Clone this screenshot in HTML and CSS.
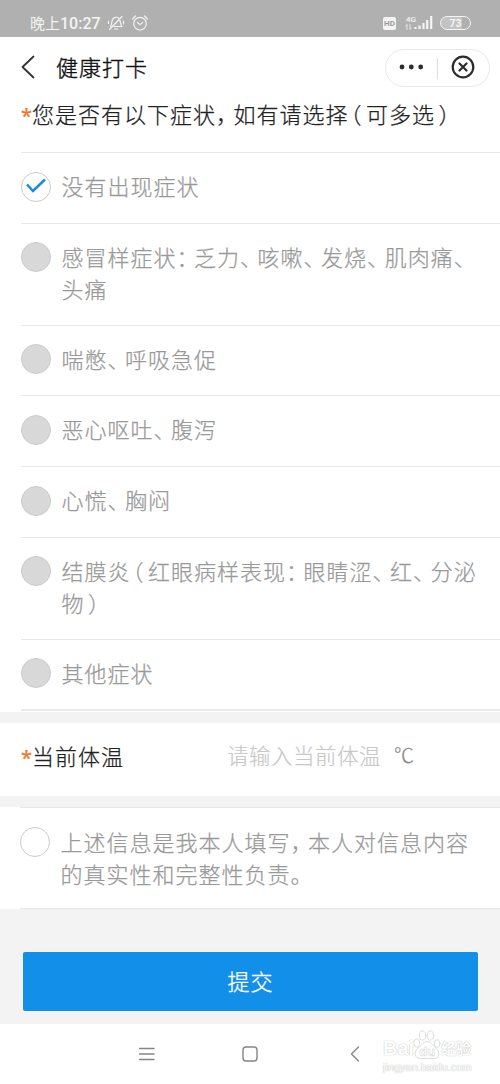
FILE: index.html
```html
<!DOCTYPE html>
<html lang="zh-CN">
<head>
<meta charset="utf-8">
<title>健康打卡</title>
<link rel="stylesheet" href="styles.css">
</head>
<body>
<div class="status">
  <span class="clock">晚上<b>10:27</b></span>
  <svg class="mute" width="18" height="18" viewBox="0 0 18 18"><path d="M3.5 12.5C5 11 4.5 8 5.500 5.500C6.500 3 10.500 2.500 12 4.500M13 6.500C13.600 9 13.500 11 15 12.500H7M7.500 15H10.500M2.500 15.500L15 2.500M1.500 7V9.500M16.500 7V10"/></svg>
  <svg class="alarm" width="18" height="18" viewBox="0 0 18 18"><circle cx="9" cy="9.700" r="6.300"/><path d="M6.500 8.500L9 10.600L11.700 8.500M1.500 5L4.500 2M13.500 2L16.500 5"/></svg>
  <span class="hd">HD</span>
  <span class="net"><span>4G</span><svg width="7" height="6" viewBox="0 0 7 6"><path d="M2 5.500V.5L.7 2M5 .5V5.500L6.300 4"/></svg></span>
  <svg class="bars" width="19" height="14" viewBox="0 0 19 14"><path d="M1.500 13V11M5.500 13V9.500M9.500 13V7M13.200 13V4M17.200 13V0"/></svg>
  <span class="battery">73</span>
</div>
<header class="header">
  <svg class="back" width="14" height="24" viewBox="0 0 14 24"><path d="M12.500 1.500L1.500 12L12.500 22.500"/></svg>
  <h1 class="title">健康打卡</h1>
  <div class="capsule">
    <svg width="25" height="6" viewBox="0 0 25 6"><circle cx="3" cy="3" r="2.400"/><circle cx="12.300" cy="3" r="2.400"/><circle cx="21.700" cy="3" r="2.400"/></svg>
    <i class="divider"></i>
    <svg class="close" width="24" height="24" viewBox="0 0 24 24"><circle cx="12" cy="12" r="10.300"/><path d="M8.500 8.500L15.500 15.500M15.500 8.500L8.500 15.500"/></svg>
  </div>
</header>
<main>
  <section class="symptoms">
    <h2 class="question"><span class="star">*</span>您是否有以下症状<span class="p">，</span>如有请选择<span class="open">（</span>可多选<span class="close-paren">）</span></h2>
    <ul class="options">
      <li class="option"><span class="radio checked"><svg width="20" height="15" viewBox="0 0 20 15"><path d="M1 6.500L7 13L19 1.500"/></svg></span><span class="label">没有出现症状</span></li>
      <li class="option tall"><span class="radio off"></span><span class="label">感冒样症状<span class="p">：</span>乏力<span class="p">、</span>咳嗽<span class="p">、</span>发烧<span class="p">、</span>肌肉痛<span class="p">、</span><br>头痛</span></li>
      <li class="option"><span class="radio off"></span><span class="label">喘憋<span class="p">、</span>呼吸急促</span></li>
      <li class="option"><span class="radio off"></span><span class="label">恶心呕吐<span class="p">、</span>腹泻</span></li>
      <li class="option"><span class="radio off"></span><span class="label">心慌<span class="p">、</span>胸闷</span></li>
      <li class="option tall"><span class="radio off"></span><span class="label">结膜炎<span class="open">（</span>红眼病样表现<span class="p">：</span>眼睛涩<span class="p">、</span>红<span class="p">、</span>分泌<br>物<span class="close-paren">）</span></span></li>
      <li class="option"><span class="radio off"></span><span class="label">其他症状</span></li>
    </ul>
  </section>
  <section class="temperature">
    <span class="field"><span class="star">*</span>当前体温</span>
    <span class="placeholder">请输入当前体温</span>
    <span class="unit">℃</span>
  </section>
  <section class="agreement">
    <div class="agree-row"><span class="radio"></span><span class="label">上述信息是我本人填写<span class="p">，</span>本人对信息内容<br>的真实性和完整性负责<span class="p">。</span></span></div>
  </section>
  <div class="actions"><button class="submit">提交</button></div>
</main>
<nav class="navbar">
  <svg class="menu" width="16" height="14" viewBox="0 0 16 14"><path d="M.5 1.500H15M.5 7H15M.5 12.500H15"/></svg>
  <svg class="home" width="16" height="16" viewBox="0 0 16 16"><rect x="1" y="1" width="14" height="14" rx="3"/></svg>
  <svg class="return" width="10" height="16" viewBox="0 0 10 16"><path d="M8.500 1L1.500 8L8.500 15"/></svg>
  <div class="watermark">
    <div class="brand"><span class="bai">Bai</span>
      <svg width="28" height="30" viewBox="0 0 28 30"><ellipse cx="3.700" cy="13" rx="2.800" ry="4"/><ellipse cx="9.500" cy="5.500" rx="3.300" ry="4.700"/><ellipse cx="17.500" cy="5.500" rx="3.300" ry="4.700"/><ellipse cx="24" cy="13.500" rx="2.800" ry="3.800"/><path d="M14 11.500C10 11.500 9 15 5 18C0 22 2 28.500 7 28.500H21C26 28.500 28 22 23 18C19 15 18 11.500 14 11.500Z"/><text x="6.300" y="26">du</text></svg>
      <span class="jy">经验</span></div>
    <div class="url">jingyan.baidu.com</div>
  </div>
</nav>
</body>
</html>
```

FILE: styles.css
```css
* { box-sizing: border-box; }
body {
  margin: 0;
  width: 500px;
  height: 1084px;
  overflow: hidden;
  display: flex;
  flex-direction: column;
  background: #f3f3f3;
  color: #222;
  font-family: "Noto Sans CJK SC", sans-serif;
  font-size: 22px;
  font-weight: 300;
  letter-spacing: 1px;
  text-spacing-trim: space-all;
}
svg { display: block; flex: none; fill: none; stroke-linecap: round; stroke-linejoin: round; }
.p { letter-spacing: -4.500px; }
.open, .close-paren { font-feature-settings: "halt"; letter-spacing: 0; }
.open { margin: 0 4.500px 0 2px; }
.close-paren { margin: 0 3px 0 3.500px; }
.star { color: #f47325; font-family: "Noto Sans", sans-serif; font-weight: 400; font-size: 20px; letter-spacing: 0; }

.status {
  flex: none;
  height: 37px;
  padding: 9px 29px 0 30px;
  display: flex;
  align-items: center;
  background: #b0b0b0;
  color: #f4f4f4;
  letter-spacing: 0;
}
.status svg { stroke: #f4f4f4; stroke-width: 1.200; }
.clock { width: 72px; font-size: 15px; font-weight: 400; line-height: 20px; white-space: nowrap; }
.clock b { font: 500 16px Roboto, sans-serif; }
.mute { margin-left: 5px; }
.alarm { margin-left: 6px; }
.hd {
  margin-left: auto;
  width: 13px;
  height: 13px;
  border-radius: 2px;
  background: #f4f4f4;
  color: #999;
  font: 700 8px/13px Roboto, sans-serif;
  text-align: center;
}
.net { width: 12px; margin-left: 9px; font: 500 8px/8px Roboto, sans-serif; }
.net svg { stroke-width: .8; }
.net span { display: block; margin-left: 1px; }
.bars { margin-left: -3px; }
.status .bars { stroke-width: 2.200; stroke-linecap: butt; }
.battery {
  width: 31px;
  height: 14px;
  margin-left: 7px;
  border: 1.500px solid #f4f4f4;
  border-radius: 7px;
  background: linear-gradient(90deg, #c3c3c3 73%, #b0b0b0 73%);
  font: 700 10.500px/13px Roboto, sans-serif;
  text-align: center;
}

.header {
  flex: none;
  height: 60px;
  padding: 0 10px 0 21px;
  display: flex;
  align-items: center;
  background: #fff;
}
.back { stroke: #333; stroke-width: 1.800; }
.title { margin: -2px 0 0 21px; font-size: 22px; line-height: 30px; font-weight: 300; color: #111; -webkit-text-stroke: .4px #111; }
.capsule {
  width: 105px;
  height: 38px;
  margin: 2px 0 0 auto;
  padding: 0 14px 0 13px;
  display: flex;
  align-items: center;
  justify-content: space-between;
  border: 1px solid #e9e9e9;
  border-radius: 19px;
}
.capsule svg { margin-top: -2px; }
.capsule circle { fill: #2c2c2c; }
.divider { width: 1px; height: 21px; background: #ddd; }
.capsule .close { stroke: #2c2c2c; stroke-width: 2.200; }
.capsule .close circle { fill: none; }

main { flex: none; height: 927px; }
.symptoms { height: 615px; background: #fff; }
.question { height: 55px; margin: 0; padding: 0 0 0 21px; font-size: 22px; line-height: 32px; font-weight: 300; white-space: nowrap; -webkit-text-stroke: .25px; }
.options { margin: 0; padding: 0 0 0 21px; list-style: none; }
.option {
  height: 70.750px;
  padding-top: 18.500px;
  display: flex;
  align-items: flex-start;
  border-top: 1px solid #e8e8e8;
}
.option.tall { height: 101.750px; }
.options .option:last-child { height: 72.750px; border-bottom: 2px solid #eaeaea; }
.radio {
  flex: none;
  width: 30px;
  height: 30px;
  border: 1px solid #ccc;
  border-radius: 50%;
  display: flex;
  align-items: center;
  justify-content: center;
}
.radio.off { background: #d8d8d8; }
.radio.checked svg { stroke: #178be0; stroke-width: 2.500; stroke-linecap: butt; stroke-linejoin: miter; margin-top: -3px; }
.label { margin: -2.500px 0 0 10.500px; line-height: 32px; color: #999; white-space: nowrap; -webkit-text-stroke: .25px #999; }

.temperature {
  height: 73px;
  margin-top: 11px;
  padding: 0 21px 10px;
  display: flex;
  align-items: center;
  background: #fff;
  white-space: nowrap;
}
.field { width: 206px; -webkit-text-stroke: .25px; }
.placeholder { width: 167px; color: #c8c8c8; font-size: 21.500px; letter-spacing: .5px; -webkit-text-stroke: .2px #c8c8c8; }
.unit { color: #888; font-size: 20px; -webkit-text-stroke: .2px #888; }
.agreement { height: 102px; margin-top: 11px; padding-left: 20px; background: #fff; }
.agree-row {
  height: 102px;
  padding-top: 19px;
  display: flex;
  align-items: flex-start;
  border-top: 1px solid #e8e8e8;
  border-bottom: 1px solid #e8e8e8;
}
.actions { padding: 43px 22px 0 23px; }
.submit {
  display: block;
  width: 100%;
  height: 59px;
  padding: 0 0 4px;
  border: 0;
  border-radius: 2px;
  background: #128fe9;
  color: #fff;
  font: inherit;
  letter-spacing: 1px;
  -webkit-text-stroke: .3px #fff;
}

.navbar { height: 60px; padding-left: 139px; display: flex; align-items: center; background: #fff; }
.navbar > svg { stroke: #858585; stroke-width: 1.400; }
.home { margin-left: 87px; }
.return { margin-left: 92px; }
.watermark { margin-left: 23px; width: 95px; color: #fff; letter-spacing: 0; text-shadow: 0 0 1px #bbb, 0 0 1px #ccc; }
.brand { height: 30px; display: flex; align-items: flex-end; margin-top: -4px; }
.brand svg { stroke: #ddd; stroke-width: 1; margin-left: -1px; }
.brand svg text { font: 700 13px "Liberation Sans", sans-serif; fill: #fff; stroke: #d5d5d5; stroke-width: .5px; text-shadow: none; }
.bai { font: 700 20px/24px "Liberation Sans", sans-serif; }
.jy { font-size: 15px; line-height: 25px; font-weight: 700; white-space: nowrap; }
.url { margin-top: 1px; font: 11px/13px "Liberation Sans", sans-serif; }
```
